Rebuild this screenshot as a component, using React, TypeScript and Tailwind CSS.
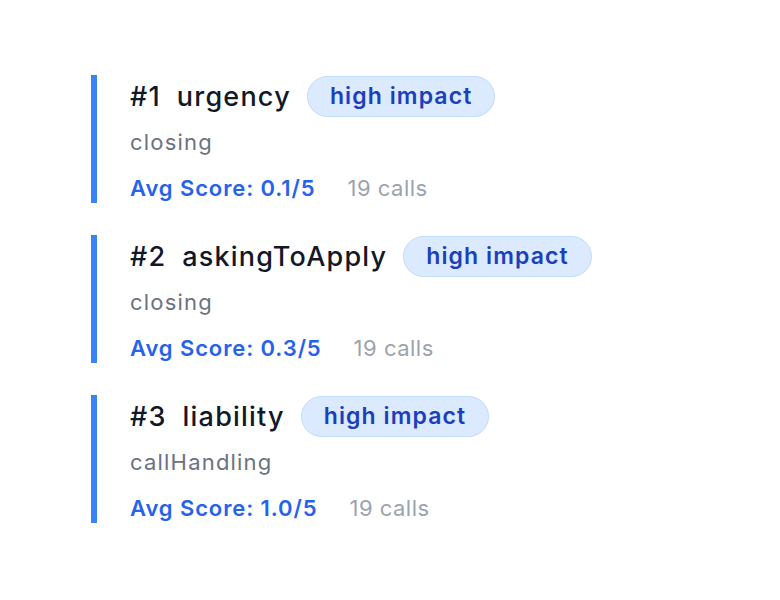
const items = [
  { rank: 1, name: 'urgency', category: 'closing', score: '0.1/5', calls: 19 },
  { rank: 2, name: 'askingToApply', category: 'closing', score: '0.3/5', calls: 19 },
  { rank: 3, name: 'liability', category: 'callHandling', score: '1.0/5', calls: 19 },
];

const App = () => {
  return (
    <div className="min-h-screen bg-white pt-[75px] pl-[91px] font-['Inter',sans-serif]">
      <div className="flex flex-col gap-8">
        {items.map((item) => (
          <div key={item.rank} className="h-[128px] border-l-[6px] border-[#3b82f6] pl-[33px]">
            {/* title row */}
            <div className="flex h-[42px] items-center gap-4">
              <span className="mt-[2px] text-[27px] font-medium tracking-[1.2px] text-[#111827]">#{item.rank}</span>
              <span className="mt-[2px] text-[27px] font-medium tracking-[1.2px] text-[#111827]">{item.name}</span>
              <span className="flex h-[41px] items-center rounded-full border border-[#bfdbfe] bg-[#dbeafe] px-[22px] text-[23px] font-semibold tracking-[1.1px] text-[#1c3fbb]">
                high impact
              </span>
            </div>
            <div className="mt-[10px] text-[22px] leading-[30px] tracking-[1.2px] text-[#6b7280]">{item.category}</div>
            <div className="mt-[16px] flex gap-8 text-[22px] leading-[30px]">
              <span className="font-semibold tracking-[0.9px] text-[#2563eb]">Avg Score: {item.score}</span>
              <span className="tracking-[0.5px] text-[#9ca3af]">{item.calls} calls</span>
            </div>
          </div>
        ))}
      </div>
    </div>
  );
};

export default App;
